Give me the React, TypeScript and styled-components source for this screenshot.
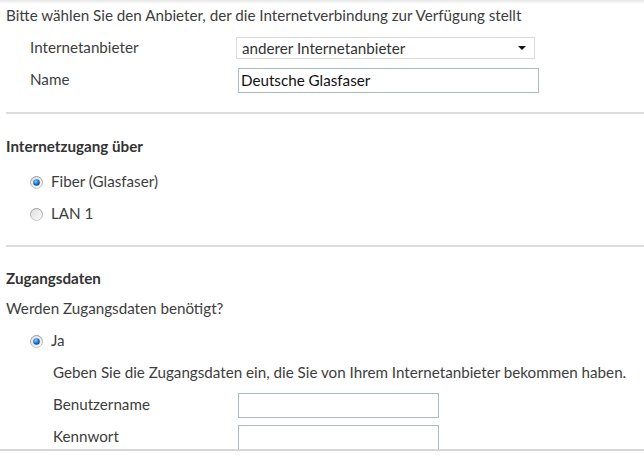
import React from "react";
import styled, { createGlobalStyle } from "styled-components";

const Global = createGlobalStyle`
  html, body { margin: 0; padding: 0; background: #fff; }
  body {
    font-family: Lato, "Open Sans", "Liberation Sans", sans-serif;
    font-size: 15.2px;
    color: #3d3d3d;
  }
`;

const Page = styled.div`
  width: 644px;
  height: 456px;
  display: flex;
  flex-direction: column;
  overflow: hidden;
  position: relative;
`;

const TopShade = styled.div`
  position: absolute;
  top: 0;
  left: 0;
  right: 0;
  height: 4px;
  background: linear-gradient(#e6e6e6, rgba(255, 255, 255, 0));
`;

const Content = styled.div`
  height: 449px;
  overflow: hidden;
  padding: 0 0 0 6px;
  box-sizing: border-box;
`;

const Footer = styled.div`
  flex: 1;
  border-top: 2px solid #d6d6d6;
  background: #fff;
`;

const Section = styled.section<{ $top?: number; $bottom?: number }>`
  padding: ${(p) => p.$top ?? 0}px 0 ${(p) => p.$bottom ?? 16}px;
`;

const Divider = styled.hr`
  border: 0;
  border-top: 2px solid #dcdcdc;
  margin: 0;
`;

const Text = styled.p<{ $indent?: number }>`
  margin: 0;
  height: 32px;
  line-height: 30px;
  padding-left: ${(p) => p.$indent ?? 0}px;
  white-space: nowrap;
`;

const Heading = styled.h3<{ $gap: number }>`
  margin: 0 0 ${(p) => p.$gap}px;
  height: 30px;
  line-height: 30px;
  font-size: 15.2px;
  font-weight: bold;
  color: #333;
`;

const FieldRow = styled.div<{ $indent: number }>`
  display: grid;
  grid-template-columns: ${(p) => 232 - p.$indent}px auto;
  align-items: center;
  height: 32px;
  padding-left: ${(p) => p.$indent}px;
`;

const Label = styled.label`
  line-height: 30px;
  margin-top: -2px;
`;

const SelectBox = styled.div`
  width: 299px;
  height: 22px;
  margin-left: -2px;
  box-sizing: border-box;
  border: 1px solid #dadada;
  display: flex;
  align-items: center;
  justify-content: space-between;
  padding: 0 8px 0 5px;
  color: #333;
`;

const Caret = styled.span`
  width: 0;
  height: 0;
  border-left: 4px solid transparent;
  border-right: 4px solid transparent;
  border-top: 4px solid #111;
`;

const Input = styled.div<{ $width: number }>`
  width: ${(p) => p.$width}px;
  height: 25px;
  box-sizing: border-box;
  border: 1px solid #a9bcc0;
  padding: 0 2px;
  line-height: 23px;
  color: #111;
`;

const RadioRow = styled.label<{ $indent: number }>`
  display: flex;
  align-items: center;
  gap: 8px;
  height: 32px;
  padding-left: ${(p) => p.$indent}px;

  & > span {
    line-height: 30px;
    margin-top: -2px;
  }
`;

const Radio = ({ checked }: { checked?: boolean }) => (
  <svg width="13" height="13" viewBox="0 0 13 13">
    <defs>
      <linearGradient id="rb" x1="0" y1="0" x2="0" y2="1">
        <stop offset="0" stopColor="#9a9a9a" />
        <stop offset="1" stopColor="#c8c8c8" />
      </linearGradient>
      <linearGradient id="rf" x1="0" y1="0" x2="1" y2="1">
        <stop offset="0" stopColor="#dedede" />
        <stop offset="1" stopColor="#fafafa" />
      </linearGradient>
      <radialGradient id="dot" cx="0.4" cy="0.35" r="0.7">
        <stop offset="0" stopColor="#8fd0ff" />
        <stop offset="0.5" stopColor="#1e7fd6" />
        <stop offset="1" stopColor="#0b3e78" />
      </radialGradient>
    </defs>
    <circle cx="6.5" cy="6.5" r="6" fill="url(#rf)" stroke="url(#rb)" strokeWidth="1" />
    {checked && <circle cx="6.5" cy="6.5" r="3.3" fill="url(#dot)" />}
  </svg>
);

export default function App() {
  return (
    <Page>
      <Global />
      <TopShade />
      <Content>
        <Section>
          <Text>Bitte wählen Sie den Anbieter, der die Internetverbindung zur Verfügung stellt</Text>
          <FieldRow $indent={24}>
            <Label>Internetanbieter</Label>
            <SelectBox>
              <span>anderer Internetanbieter</span>
              <Caret />
            </SelectBox>
          </FieldRow>
          <FieldRow $indent={24}>
            <Label>Name</Label>
            <Input $width={301}>Deutsche Glasfaser</Input>
          </FieldRow>
        </Section>
        <Divider />
        <Section $top={17} $bottom={15}>
          <Heading $gap={5}>Internetzugang über</Heading>
          <RadioRow $indent={24}>
            <Radio checked />
            <span>Fiber (Glasfaser)</span>
          </RadioRow>
          <RadioRow $indent={24}>
            <Radio />
            <span>LAN 1</span>
          </RadioRow>
        </Section>
        <Divider />
        <Section $top={16}>
          <Heading $gap={0}>Zugangsdaten</Heading>
          <Text>Werden Zugangsdaten benötigt?</Text>
          <RadioRow $indent={24}>
            <Radio checked />
            <span>Ja</span>
          </RadioRow>
          <Text $indent={47}>
            Geben Sie die Zugangsdaten ein, die Sie von Ihrem Internetanbieter bekommen haben.
          </Text>
          <FieldRow $indent={47}>
            <Label>Benutzername</Label>
            <Input $width={201} />
          </FieldRow>
          <FieldRow $indent={47}>
            <Label>Kennwort</Label>
            <Input $width={201} />
          </FieldRow>
        </Section>
      </Content>
      <Footer />
    </Page>
  );
}
